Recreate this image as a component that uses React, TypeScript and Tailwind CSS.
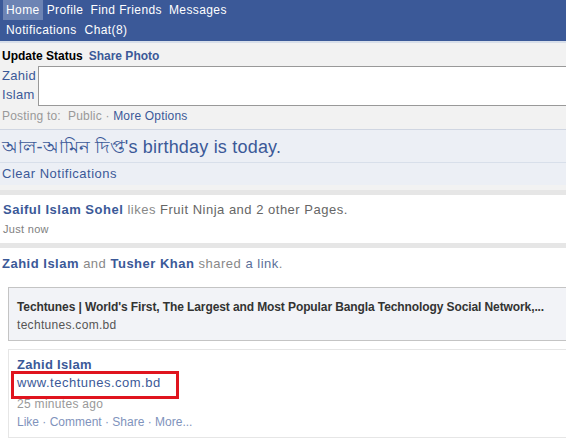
import React from "react";

const navTop = ["Home", "Profile", "Find Friends", "Messages"];
const navBottom = ["Notifications", "Chat(8)"];

function NavLink({ label, active }: { label: string; active?: boolean }) {
  return (
    <span
      className={`px-[3px] h-[20px] leading-[20px] tracking-[0.4px] ${
        active ? "bg-[#6d84b4]" : ""
      }`}
    >
      {label}
    </span>
  );
}

export default function App() {
  return (
    <div className="w-[566px] h-[442px] overflow-hidden bg-white text-[13px] font-['Liberation_Sans',Arial,sans-serif]">
      {/* top nav */}
      <div className="bg-[#3b5998] text-white text-[12px] h-[41px] border-b-2 border-[#d8dfea] box-content">
        <div className="flex pl-[3px] gap-[1px]">
          {navTop.map((l, i) => (
            <NavLink key={l} label={l} active={i === 0} />
          ))}
        </div>
        <div className="flex pl-[3px] gap-[2px]">
          {navBottom.map((l) => (
            <NavLink key={l} label={l} />
          ))}
        </div>
      </div>

      {/* composer */}
      <div className="bg-[#f2f2f2] pt-[5px] pb-[5px] border-b border-[#d0d6e2]">
        <div className="flex gap-[6px] pl-[2px] font-bold text-[12px] h-[17px] leading-[17px]">
          <span className="text-black">Update Status</span>
          <span className="text-[#3b5998]">Share Photo</span>
        </div>
        <div className="flex mt-[1px]">
          <div className="w-[38px] pl-[2px] text-[#3b5998] leading-[19px] tracking-[0.3px]">
            Zahid
            <br />
            Islam
          </div>
          <div className="flex-1 h-[40px] bg-white border border-[#999] border-r-0" />
        </div>
        <div className="pl-[2px] mt-[2px] text-[12px] leading-[16px] tracking-[0.2px] text-[#999]">
          Posting to:&nbsp; Public ·{" "}
          <span className="text-[#3b5998]">More Options</span>
        </div>
      </div>

      {/* birthday */}
      <div className="bg-[#eceff5]">
        <div className="h-[33px] leading-[35px] pl-[2px] text-[18px] text-[#3b5998] tracking-[0.2px] border-b border-[#d8dfea]">
          আল-আমিন দিপ্ত's birthday is today.
        </div>
        <div className="h-[22px] leading-[22px] pl-[2px] text-[#3b5998] tracking-[0.5px]">
          Clear Notifications
        </div>
      </div>
      <div className="h-[5px] bg-[#f2f2f2]" />
      <div className="h-[5px] bg-[#e6e6e6]" />

      {/* story 1 */}
      <div className="bg-white pt-[6px] pb-[4px] pl-[3px]">
        <div className="leading-[18px] tracking-[0.5px] text-[#888]">
          <span className="font-bold text-[#3b5998]">Saiful Islam Sohel</span>{" "}
          likes <span className="text-[#666]">Fruit Ninja</span>{" "}
          <span className="text-[#666]">and 2 other Pages.</span>
        </div>
        <div className="text-[11px] leading-[20px] text-[#808080] tracking-[0.3px]">Just now</div>
      </div>
      <div className="h-[5px] bg-[#e6e6e6]" />

      {/* story 2 */}
      <div className="bg-white pt-[7px] pl-[2px]">
        <div className="leading-[18px] tracking-[0.5px] text-[#888]">
          <span className="font-bold text-[#3b5998]">Zahid Islam</span> and{" "}
          <span className="font-bold text-[#3b5998]">Tusher Khan</span> shared{" "}
          <span className="text-[#5a6f99]">a link</span>.
        </div>
        <div className="ml-[6px] mt-[14px] bg-[#f2f3f7] border border-[#c4c4c4] border-r-0 pt-[10px] pb-[6px] pl-[8px]">
          <div className="font-bold text-[12px] leading-[18px] text-[#333] tracking-[-0.1px]">
            Techtunes | World's First, The Largest and Most Popular Bangla Technology Social Network,...
          </div>
          <div className="text-[12px] leading-[18px] text-[#555] tracking-[0.3px]">
            techtunes.com.bd
          </div>
        </div>
        <div className="ml-[6px] mt-[8px] border-t border-b border-l border-[#e6e6e6] pt-[6px] pb-[6px] pl-[8px]">
          <div className="font-bold leading-[17px] text-[#3b5998] tracking-[0.3px]">Zahid Islam</div>
          <div className="relative leading-[20px] text-[#3b5998] tracking-[0.5px]">
            www.techtunes.com.bd
            <div className="absolute left-[-6px] top-[-2px] w-[168px] h-[28px] border-[3px] border-[#e0141e]" />
          </div>
          <div className="mt-[1px] text-[12px] leading-[20px] text-[#999] tracking-[0.3px]">
            25 minutes ago
          </div>
          <div className="text-[12px] leading-[17px] text-[#7f93bc]">
            Like · Comment · Share · More...
          </div>
        </div>
      </div>
    </div>
  );
}
